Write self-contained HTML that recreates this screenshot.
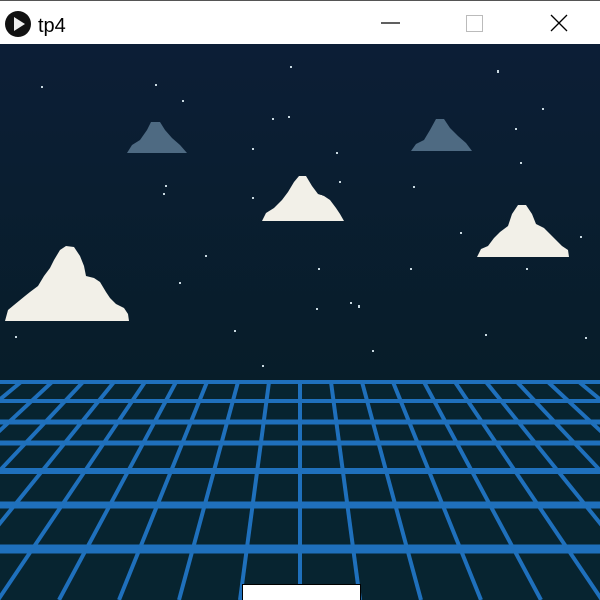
<!DOCTYPE html>
<html><head><style>
body{margin:0;width:600px;height:600px;overflow:hidden;background:#fff;font-family:"Liberation Sans",sans-serif}
.bar{position:absolute;left:0;top:0;width:600px;height:44px;background:#fff;border-top:1px solid #555;box-sizing:border-box}
</style></head><body>
<div class="bar">
<svg width="600" height="44" style="position:absolute;left:0;top:0">
<circle cx="18" cy="23" r="13" fill="#111"/>
<polygon points="14,16 14,30 25,23" fill="#eee"/>
<text x="38" y="31" font-size="20" font-family="Liberation Sans" fill="#000">tp4</text>
<line x1="381" y1="22" x2="400" y2="22" stroke="#000" stroke-width="1.3"/>
<rect x="466.5" y="14.5" width="16" height="16" fill="none" stroke="#bbb"/>
<path d="M551 14 L567 30 M567 14 L551 30" stroke="#000" stroke-width="1.3"/>
</svg>
</div>
<svg width="600" height="556" style="position:absolute;left:0;top:44px" viewBox="0 44 600 556">
<defs><linearGradient id="s" x1="0" y1="0" x2="0" y2="1">
<stop offset="0" stop-color="#0c1e36"/><stop offset="1" stop-color="#071d29"/></linearGradient></defs>
<rect x="0" y="44" width="600" height="340" fill="url(#s)"/>
<rect x="0" y="380" width="600" height="220" fill="#072430"/>
<g fill="#c8d8e0">
<rect x="41" y="86" width="2" height="2"/><rect x="155" y="84" width="2" height="2"/><rect x="182" y="100" width="2" height="2"/><rect x="290" y="66" width="2" height="2"/><rect x="497" y="70" width="2" height="3"/><rect x="272" y="118" width="2" height="2"/><rect x="288" y="116" width="2" height="2"/><rect x="252" y="148" width="2" height="2"/><rect x="336" y="152" width="2" height="2"/><rect x="165" y="185" width="2" height="2"/><rect x="163" y="193" width="2" height="2"/><rect x="252" y="197" width="2" height="2"/><rect x="339" y="181" width="2" height="2"/><rect x="515" y="128" width="2" height="2"/><rect x="542" y="108" width="2" height="2"/><rect x="520" y="162" width="2" height="2"/><rect x="413" y="186" width="2" height="2"/><rect x="580" y="236" width="2" height="2"/><rect x="410" y="268" width="2" height="2"/><rect x="526" y="268" width="2" height="2"/><rect x="205" y="255" width="2" height="2"/><rect x="318" y="268" width="2" height="2"/><rect x="179" y="282" width="2" height="2"/><rect x="350" y="302" width="2" height="2"/><rect x="358" y="305" width="2" height="3"/><rect x="316" y="308" width="2" height="2"/><rect x="234" y="330" width="2" height="2"/><rect x="485" y="334" width="2" height="2"/><rect x="372" y="350" width="2" height="2"/><rect x="262" y="365" width="2" height="2"/><rect x="15" y="336" width="2" height="2"/><rect x="585" y="337" width="2" height="2"/><rect x="460" y="232" width="2" height="2"/><rect x="320" y="195" width="2" height="2"/>
</g>
<g stroke="#1f70bc" fill="none">
<line x1="0" y1="382" x2="600" y2="382" stroke-width="4"/>
<line x1="0" y1="401" x2="600" y2="401" stroke-width="4"/>
<line x1="0" y1="422" x2="600" y2="422" stroke-width="5"/>
<line x1="0" y1="443" x2="600" y2="443" stroke-width="5"/>
<line x1="0" y1="471" x2="600" y2="471" stroke-width="6"/>
<line x1="0" y1="505" x2="600" y2="505" stroke-width="7"/>
<line x1="0" y1="549" x2="600" y2="549" stroke-width="9"/>
<g stroke-width="4">
<line x1="300" y1="382" x2="300" y2="600"/>
<line x1="331" y1="382" x2="360" y2="600"/><line x1="269" y1="382" x2="240" y2="600"/>
<line x1="362" y1="382" x2="421" y2="600"/><line x1="238" y1="382" x2="179" y2="600"/>
<line x1="393" y1="382" x2="481" y2="600"/><line x1="207" y1="382" x2="119" y2="600"/>
<line x1="424" y1="382" x2="541" y2="600"/><line x1="176" y1="382" x2="59" y2="600"/>
<line x1="455" y1="382" x2="602" y2="600"/><line x1="145" y1="382" x2="-2" y2="600"/>
<line x1="486" y1="382" x2="662" y2="600"/><line x1="114" y1="382" x2="-62" y2="600"/>
<line x1="517" y1="382" x2="722" y2="600"/><line x1="83" y1="382" x2="-122" y2="600"/>
<line x1="548" y1="382" x2="782" y2="600"/><line x1="52" y1="382" x2="-182" y2="600"/>
<line x1="579" y1="382" x2="842" y2="600"/><line x1="21" y1="382" x2="-242" y2="600"/>
<line x1="610" y1="382" x2="902" y2="600"/><line x1="-10" y1="382" x2="-302" y2="600"/>
</g></g>
<g fill="#4e6a82">
<polygon points="127,153 132,145 140,140 147,130 151,122 160,122 165,130 172,138 180,145 187,153"/>
<polygon points="411,151 416,144 424,140 430,130 436,119 444,119 450,128 458,136 466,143 472,151"/>
</g>
<g fill="#f2f0e8">
<polygon points="5,321 8,310 14,305 25,296 30,292 38,286 44,276 50,268 54,260 60,250 66,246 74,247 80,256 84,266 86,276 94,278 100,282 106,292 110,298 116,304 124,308 128,314 129,321"/>
<polygon points="262,221 266,213 274,208 282,200 288,192 294,182 299,176 306,176 312,186 318,194 324,196 330,200 336,208 340,214 344,221"/>
<polygon points="477,257 481,249 488,246 494,238 500,232 508,226 512,214 518,205 526,205 532,214 536,224 544,228 550,234 556,240 562,246 568,250 569,257"/>
</g>
<rect x="242.5" y="584.5" width="118" height="17" fill="#fff" stroke="#000"/>
</svg>
</body></html>
